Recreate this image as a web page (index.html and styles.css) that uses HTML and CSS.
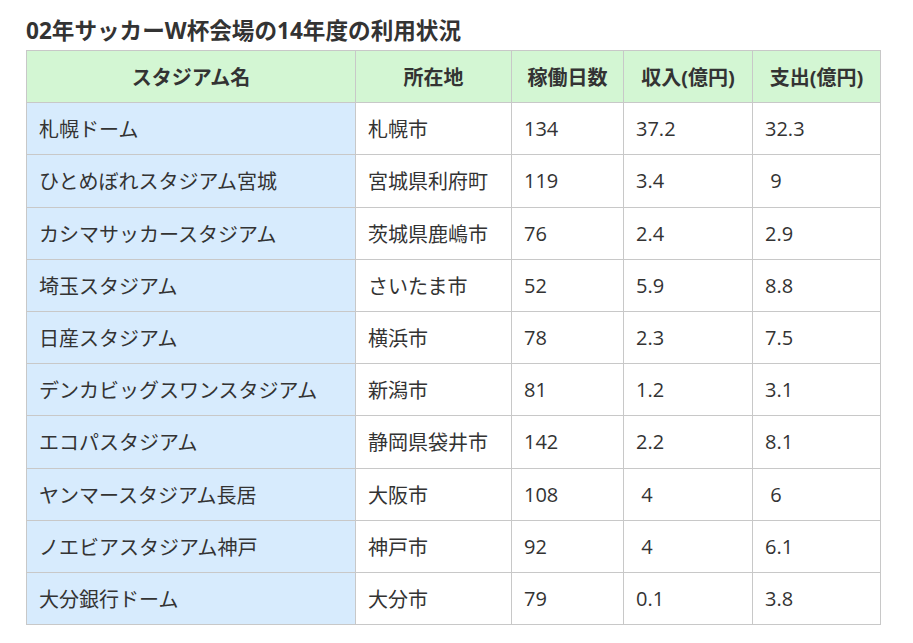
FILE: index.html
```html
<!DOCTYPE html>
<html lang="ja">
<head>
<meta charset="utf-8">
<title>02年サッカーW杯会場の14年度の利用状況</title>
<link rel="stylesheet" href="styles.css">
</head>
<body>
<div class="page">
  <h2 class="title">02年サッカーW杯会場の14年度の利用状況</h2>
  <table class="usage">
    <colgroup>
      <col class="c-name">
      <col class="c-loc">
      <col class="c-days">
      <col class="c-in">
      <col class="c-out">
    </colgroup>
    <thead>
      <tr><th>スタジアム名</th><th>所在地</th><th>稼働日数</th><th>収入(億円)</th><th>支出(億円)</th></tr>
    </thead>
    <tbody>
      <tr><td class="name">札幌ドーム</td><td>札幌市</td><td>134</td><td>37.2</td><td>32.3</td></tr>
      <tr><td class="name">ひとめぼれスタジアム宮城</td><td>宮城県利府町</td><td>119</td><td>3.4</td><td>&nbsp;9</td></tr>
      <tr><td class="name">カシマサッカースタジアム</td><td>茨城県鹿嶋市</td><td>76</td><td>2.4</td><td>2.9</td></tr>
      <tr><td class="name">埼玉スタジアム</td><td>さいたま市</td><td>52</td><td>5.9</td><td>8.8</td></tr>
      <tr><td class="name">日産スタジアム</td><td>横浜市</td><td>78</td><td>2.3</td><td>7.5</td></tr>
      <tr><td class="name">デンカビッグスワンスタジアム</td><td>新潟市</td><td>81</td><td>1.2</td><td>3.1</td></tr>
      <tr><td class="name">エコパスタジアム</td><td>静岡県袋井市</td><td>142</td><td>2.2</td><td>8.1</td></tr>
      <tr><td class="name">ヤンマースタジアム長居</td><td>大阪市</td><td>108</td><td>&nbsp;4</td><td>&nbsp;6</td></tr>
      <tr><td class="name">ノエビアスタジアム神戸</td><td>神戸市</td><td>92</td><td>&nbsp;4</td><td>6.1</td></tr>
      <tr><td class="name">大分銀行ドーム</td><td>大分市</td><td>79</td><td>0.1</td><td>3.8</td></tr>
    </tbody>
  </table>
</div>
</body>
</html>
```
FILE: styles.css
```css
html, body {
  margin: 0;
  padding: 0;
  background: #ffffff;
}

body {
  font-family: "Open Sans", "Noto Sans CJK JP", sans-serif;
  color: #333333;
}

.page {
  padding: 16px 26px 0 26px;
}

.title {
  margin: 0 0 4px 0;
  font-size: 22.6px;
  line-height: 30px;
  font-weight: 700;
  color: #333333;
}

.usage {
  border-collapse: collapse;
  table-layout: fixed;
  width: 854px;
  font-size: 20px;
}

.c-name { width: 329px; }
.c-loc { width: 156px; }
.c-days { width: 112px; }
.c-in { width: 129px; }
.c-out { width: 128px; }

.usage th,
.usage td {
  border: 1px solid #c8c8c8;
  height: 52.2px;
  padding: 0 12px;
  box-sizing: border-box;
  white-space: nowrap;
  vertical-align: middle;
}

.usage th {
  background: #d3f6d3;
  font-weight: 700;
  text-align: center;
}

.usage td {
  text-align: left;
  font-weight: 400;
}

.usage td.name {
  background: #d7ebfd;
}
```
